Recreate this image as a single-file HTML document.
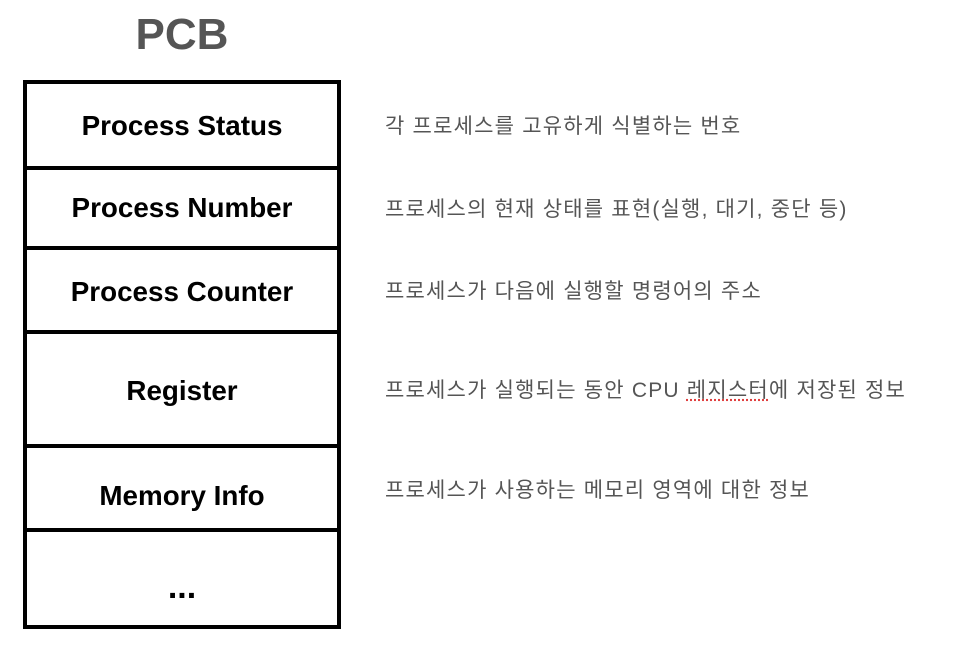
<!DOCTYPE html>
<html><head><meta charset="utf-8"><style>
body{margin:0;width:956px;height:658px;background:#fff;position:relative;overflow:hidden;font-family:"Liberation Sans","Noto Sans CJK KR",sans-serif}
.t{position:absolute;left:24px;width:316px;text-align:center;font-weight:bold;font-size:27.8px;color:#000;line-height:30px}
.l{position:absolute;left:24px;width:316px;height:4px;background:#000}
.k{position:absolute;left:385px;font-size:21px;letter-spacing:1.2px;color:#555;line-height:24px;white-space:nowrap}
</style></head><body>
<div style="position:absolute;left:24px;width:316px;top:11px;text-align:center;font-weight:bold;font-size:44px;color:#555;line-height:48px">PCB</div>
<div style="position:absolute;left:23px;top:80px;width:310px;height:541px;border:4px solid #000"></div>
<div class="l" style="top:166px"></div>
<div class="l" style="top:246px"></div>
<div class="l" style="top:330px"></div>
<div class="l" style="top:444px"></div>
<div class="l" style="top:528px"></div>
<div class="t" style="top:111px">Process Status</div>
<div class="t" style="top:193px">Process Number</div>
<div class="t" style="top:277px">Process Counter</div>
<div class="t" style="top:376px">Register</div>
<div class="t" style="top:481px">Memory Info</div>
<div class="t" style="top:572px;font-size:34px">...</div>
<div class="k" style="top:115px">각 프로세스를 고유하게 식별하는 번호</div>
<div class="k" style="top:198px">프로세스의 현재 상태를 표현(실행, 대기, 중단 등)</div>
<div class="k" style="top:280px">프로세스가 다음에 실행할 명령어의 주소</div>
<div class="k" style="top:379px">프로세스가 실행되는 동안 CPU <span style="text-decoration:underline dotted #e04040">레지스터</span>에 저장된 정보</div>
<div class="k" style="top:479px">프로세스가 사용하는 메모리 영역에 대한 정보</div>
</body></html>
